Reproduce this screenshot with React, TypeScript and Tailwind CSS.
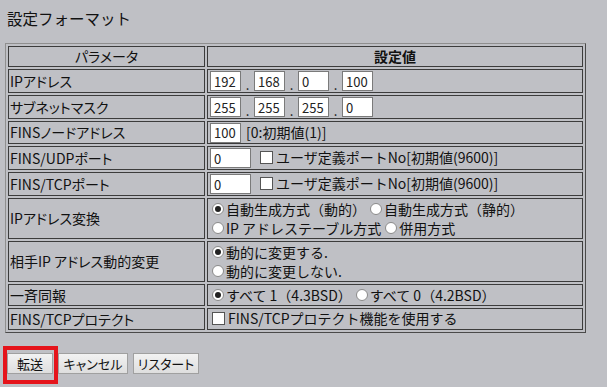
const font = "font-['Noto_Sans_CJK_JP','Noto_Sans',sans-serif]";
const palt = "[font-feature-settings:'palt']";

const Cell = ({ children, className = "" }: { children?: React.ReactNode; className?: string }) => (
  <td className={`border border-[#3c3c3c] px-[1px] py-0 align-middle ${className}`}>{children}</td>
);

const TextBox = ({ value, w }: { value: string; w: string }) => (
  <span
    className={`inline-flex items-center h-[20px] ${w} bg-white border border-[#7a7a7a] pl-[3px] text-[13px] leading-none text-[#222]`}
  >
    {value}
  </span>
);

const Radio = ({ on, label }: { on?: boolean; label: string }) => (
  <span className="inline-flex items-center mr-[4px]">
    <span className="w-[12px] h-[12px] rounded-full bg-white border border-[#8a8a8a] flex items-center justify-center mr-[2px]">
      {on && <span className="w-[6px] h-[6px] rounded-full bg-[#222]" />}
    </span>
    {label}
  </span>
);

const Check = ({ label }: { label: string }) => (
  <span className="inline-flex items-center">
    <span className="w-[13px] h-[13px] bg-white border border-[#555] mr-[3px]" />
    {label}
  </span>
);

const IpInputs = ({ parts }: { parts: string[] }) => (
  <div className="flex items-center pl-[1px]">
    {parts.map((p, i) => (
      <span key={i} className="flex items-center">
        {i > 0 && <span className="w-[13px] text-center text-[13px] leading-none pt-[6px]">.</span>}
        <TextBox value={p} w="w-[31px]" />
      </span>
    ))}
  </div>
);

const Button = ({ label, w }: { label: string; w: string }) => (
  <button
    className={`${w} h-[21px] px-0 whitespace-nowrap border border-[#a0a0a0] bg-gradient-to-b from-[#f2f2f2] to-[#dedede] text-[13px] leading-none text-[#111] ${palt}`}
  >
    {label}
  </button>
);

export default function App() {
  return (
    <div className={`w-[607px] h-[387px] bg-[#bfc0c5] text-[#111] ${font} relative overflow-hidden`}>
      <h1 className="pl-[7px] pt-[7px] text-[15.5px] leading-[22px] font-normal">設定フォーマット</h1>

      <table className="mt-[14px] ml-[5px] w-[581px] border-separate border-spacing-[2px] border border-t-[#8f8f8f] border-l-[#8f8f8f] border-r-[#4a4a4a] border-b-[#4a4a4a] text-[14px] leading-[19px]">
        <tbody>
          <tr className="h-[20px]">
            <Cell className={`w-[197px] text-center ${palt}`}>パラメータ</Cell>
            <Cell className="text-center font-bold">設定値</Cell>
          </tr>
          <tr className="h-[24px]">
            <Cell className={palt}>IPアドレス</Cell>
            <Cell>
              <IpInputs parts={["192", "168", "0", "100"]} />
            </Cell>
          </tr>
          <tr className="h-[24px]">
            <Cell className={palt}>サブネットマスク</Cell>
            <Cell>
              <IpInputs parts={["255", "255", "255", "0"]} />
            </Cell>
          </tr>
          <tr className="h-[23px]">
            <Cell className={palt}>FINSノードアドレス</Cell>
            <Cell>
              <div className="flex items-center pl-[1px]">
                <TextBox value="100" w="w-[31px]" />
                <span className="ml-[5px]">[0:初期値(1)]</span>
              </div>
            </Cell>
          </tr>
          <tr className="h-[24px]">
            <Cell className={palt}>FINS/UDPポート</Cell>
            <Cell>
              <div className="flex items-center pl-[1px]">
                <TextBox value="0" w="w-[41px]" />
                <span className="ml-[9px]">
                  <Check label="ユーザ定義ポートNo[初期値(9600)]" />
                </span>
              </div>
            </Cell>
          </tr>
          <tr className="h-[24px]">
            <Cell className={palt}>FINS/TCPポート</Cell>
            <Cell>
              <div className="flex items-center pl-[1px]">
                <TextBox value="0" w="w-[41px]" />
                <span className="ml-[9px]">
                  <Check label="ユーザ定義ポートNo[初期値(9600)]" />
                </span>
              </div>
            </Cell>
          </tr>
          <tr className="h-[41px]">
            <Cell className={palt}>IPアドレス変換</Cell>
            <Cell className="pl-[4px]">
              <div className="flex">
                <Radio on label="自動生成方式（動的）" />
                <Radio label="自動生成方式（静的）" />
              </div>
              <div className="flex">
                <Radio label="IP アドレステーブル方式" />
                <Radio label="併用方式" />
              </div>
            </Cell>
          </tr>
          <tr className="h-[41px]">
            <Cell className={palt}>相手IP アドレス動的変更</Cell>
            <Cell className="pl-[4px]">
              <div className="flex">
                <Radio on label="動的に変更する." />
              </div>
              <div className="flex">
                <Radio label="動的に変更しない." />
              </div>
            </Cell>
          </tr>
          <tr className="h-[22px]">
            <Cell className={palt}>一斉同報</Cell>
            <Cell className="pl-[4px]">
              <div className="flex">
                <Radio on label="すべて 1（4.3BSD）" />
                <Radio label="すべて 0（4.2BSD）" />
              </div>
            </Cell>
          </tr>
          <tr className="h-[22px]">
            <Cell className={palt}>FINS/TCPプロテクト</Cell>
            <Cell className="pl-[4px]">
              <Check label="FINS/TCPプロテクト機能を使用する" />
            </Cell>
          </tr>
        </tbody>
      </table>

      <div className="flex gap-[5px] pl-[7px] mt-[20px]">
        <Button label="転送" w="w-[46px]" />
        <Button label="キャンセル" w="w-[70px]" />
        <Button label="リスタート" w="w-[66px]" />
      </div>
      <div className="absolute left-[3px] top-[346px] w-[55px] h-[38px] border-[4px] border-[#e5141b]" />
    </div>
  );
}
